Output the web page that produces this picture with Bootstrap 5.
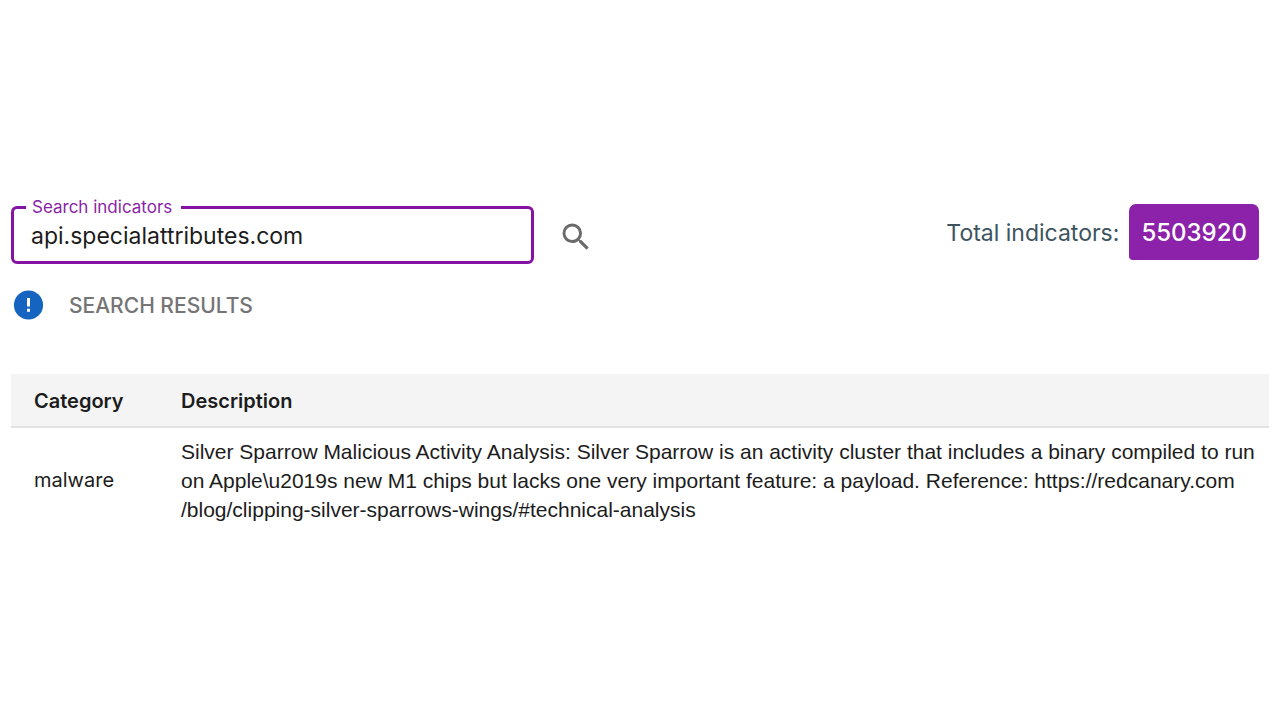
<!DOCTYPE html>
<html lang="en">
<head>
<meta charset="utf-8">
<meta name="viewport" content="width=device-width, initial-scale=1">
<title>Search indicators</title>
<link href="https://cdn.jsdelivr.net/npm/bootstrap@5.3.0/dist/css/bootstrap.min.css" rel="stylesheet">
<style>
body { font-family: Inter, "Liberation Sans", sans-serif; color: #1c1c1c; background: #fff; }
.page-body { padding: 198px 11px 0; }
.search-form { width: 50%; }
.outlined { border: 3px solid #8413a4; border-radius: 6px; height: 66px; padding: 0 17px; }
.outlined legend { float: none; width: auto; margin: 0 0 0 -5px; padding: 0 9px 0 6px; font-size: 17px; line-height: 18px; color: #8a1fa8; }
.outlined input { font-size: 23px; line-height: 30px; color: #1c1c1c; margin-top: 5px; outline: 0; }
.icon-btn { line-height: 0; margin: 11px 46px 0 24px; }
.total-group { margin: 6px 10px 0 0; gap: 10px; }
.total-label { font-size: 23px; line-height: 30px; padding-top: 2px; color: #3d545e; }
.total-badge { font-size: 24px; line-height: 54px; padding: 2px 12px 0; background: #8c22a9; border-radius: 7px 7px 4px 4px; }
.results-head { padding: 26px 0 0 2px; gap: 25px; }
.results-title { font-size: 21px; line-height: 28px; padding-top: 2px; color: #757575; }
.results-table { margin-top: 54px; font-size: 20px; line-height: 29px; --bs-table-color: #1c1c1c; }
.results-table th { background: #f4f4f4; font-weight: 600; padding: 13px 0 10px; border-bottom: 2px solid #e2e2e2; }
.results-table td { padding: 9px 0; border: 0; }
.results-table tr > :first-child { width: 170px; padding-left: 23px; }
.results-table .description { font-family: "Liberation Sans", sans-serif; font-size: 21px; }
</style>
</head>
<body>
<main class="page-body">
  <div class="d-flex justify-content-between align-items-start">
    <form class="search-form d-flex align-items-center">
      <fieldset class="outlined flex-grow-1">
        <legend><label for="query">Search indicators</label></legend>
        <input id="query" type="text" class="d-block w-100 border-0 p-0 bg-transparent" value="api.specialattributes.com">
      </fieldset>
      <button type="button" class="btn p-0 border-0 icon-btn" aria-label="Search">
        <svg width="36" height="36" viewBox="0 0 24 24" fill="#6b6b6b" aria-hidden="true"><path d="M15.500 14h-.79l-.28-.27A6.470 6.470 0 0 0 16 9.500 6.500 6.500 0 1 0 9.500 16c1.610 0 3.090-.59 4.230-1.570l.27.28v.79l5 4.990L20.490 19l-4.990-5zm-6 0C7.010 14 5 11.990 5 9.500S7.010 5 9.500 5 14 7.010 14 9.500 11.990 14 9.500 14z"/></svg>
      </button>
    </form>
    <div class="total-group d-flex align-items-center flex-shrink-0">
      <span class="total-label">Total indicators:</span>
      <span class="total-badge text-white fw-medium">5503920</span>
    </div>
  </div>
  <div class="results-head d-flex align-items-center">
    <svg width="31" height="30" viewBox="0 0 30 30" aria-hidden="true"><circle cx="15" cy="15" r="14.600" fill="#1565c0"/><path fill="#fff" d="M13.500 8h3v8.500h-3zM13.500 18.800h3v3h-3z"/></svg>
    <h1 class="results-title fw-medium mb-0">SEARCH RESULTS</h1>
  </div>
  <table class="table results-table mb-0 align-middle">
    <thead><tr><th scope="col">Category</th><th scope="col">Description</th></tr></thead>
    <tbody>
      <tr>
        <td>malware</td>
        <td class="description">Silver Sparrow Malicious Activity Analysis: Silver Sparrow is an activity cluster that includes a binary compiled to run on Apple\u2019s new M1 chips but lacks one very important feature: a payload. Reference: https://redcanary.com<wbr>/blog/clipping-silver-sparrows-wings/#technical-analysis</td>
      </tr>
    </tbody>
  </table>
</main>
<script src="https://cdn.jsdelivr.net/npm/bootstrap@5.3.0/dist/js/bootstrap.bundle.min.js"></script>
</body>
</html>
